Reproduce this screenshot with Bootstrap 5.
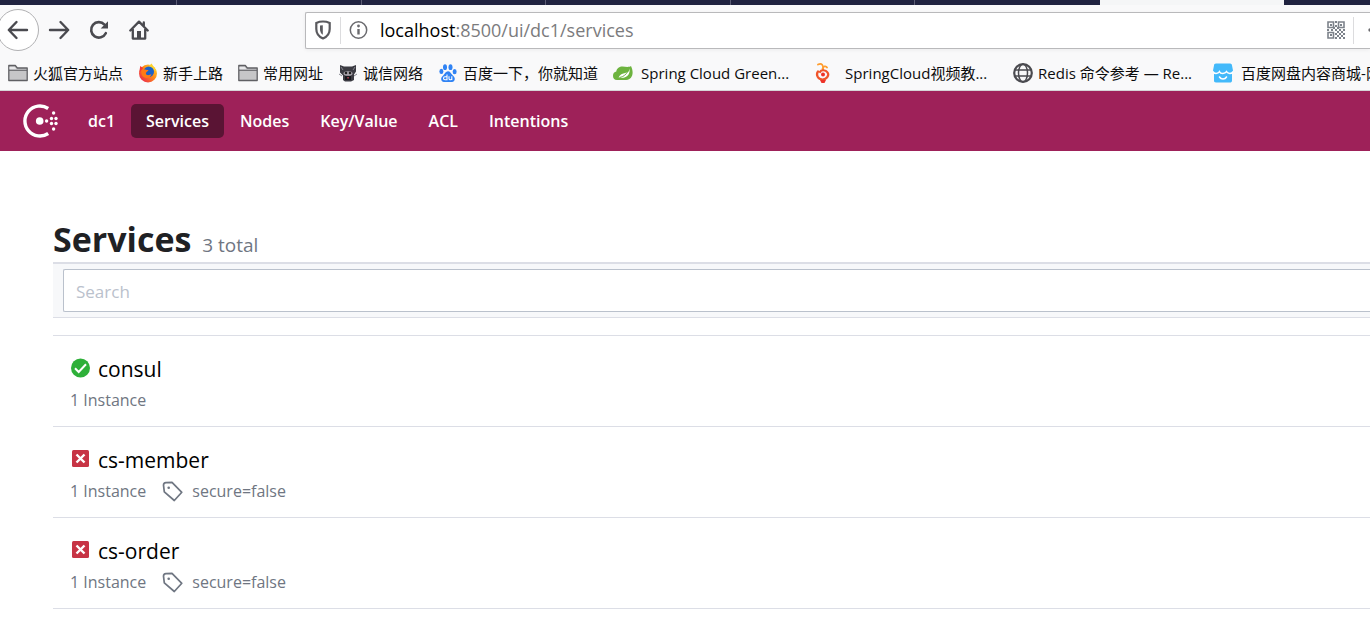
<!DOCTYPE html>
<html lang="zh-CN">
<head>
<meta charset="utf-8">
<meta name="viewport" content="width=device-width, initial-scale=1">
<title>Consul by HashiCorp</title>
<link rel="stylesheet" href="https://cdn.jsdelivr.net/npm/bootstrap@5.3.0/dist/css/bootstrap.min.css">
<script src="https://cdn.jsdelivr.net/npm/bootstrap@5.3.0/dist/js/bootstrap.bundle.min.js"></script>
<style>
  body { font-family: "Open Sans", "Noto Sans CJK SC", sans-serif; color: #000; background: #fff; overflow-x: hidden; }
  svg { display: block; flex: none; }

  /* browser frame */
  .tab-strip { height: 5px; background: #202340; overflow: hidden; }
  .tab-edge { flex: none; width: 184px; border-right: 1px solid #5b5c74; }
  .tab-edge:nth-child(even) { width: 185px; }
  .tab-edge:first-child { width: 177px; }
  .tab-edge.current { background: #f5f6f7; border: 0; }
  .tab-edge.before-current { border-color: #202340; }
  .toolbar { background: #f9f9fa; height: 50px; }
  .tool-btn { width: 40px; height: 42px; border: 0; padding: 0; background: none; display: grid; place-items: center; }
  .tool-btn.back { width: 42px; border: 1px solid #b1b1b3; border-radius: 50%; background: #fff; margin-left: -3px; }
  .address { height: 37px; margin-left: 146px; background: #fff; border: 1px solid #b9b9bb; border-right: 0; border-radius: 2px 0 0 2px; box-shadow: 0 1px 4px rgba(0,0,0,.06); }
  .address .rule { width: 1px; height: 27px; background: #dcdcde; }
  .url { font-size: 18px; line-height: 26px; color: #7b7b7d; }
  .url b { font-weight: 400; color: #000; }
  .bookmarks { background: #f9f9fa; height: 36px; gap: 15px; padding: 0 0 0 8px; border-bottom: 1px solid #d5d5d7; overflow: hidden; }
  .bookmark { display: flex; align-items: center; gap: 5px; flex: none; color: #0c0c0d; font-size: 15px; line-height: 20px; white-space: nowrap; text-decoration: none; }
  .bookmark.wide { width: 185px; gap: 8px; }
  .bookmark.globe { gap: 5px; }

  /* consul */
  .consul-bar { background: #9e2159; height: 60px; padding: 0 0 0 23px; }
  .consul-bar .nav { gap: 1px; margin-left: 14px; }
  .consul-bar .nav-link { color: #fff; font-size: 16px; font-weight: 600; line-height: 24px; padding: 5px 15px; border-radius: 5px; }
  .consul-bar .nav-link.active { background: #5a1434; }
  .page-body { padding: 68px 0 0 53px; }
  .page-title { font-size: 34px; line-height: 40px; font-weight: 700; color: #1f2124; margin: 0; padding-bottom: 3px; }
  .page-title small { font-size: 19px; line-height: 20px; font-weight: 400; color: #6f7682; margin-left: 2px; }
  .filter { background: #f7f8fa; border-top: 2px solid #dcdee6; border-bottom: 1px solid #dcdee6; padding: 5px 0 5px 10px; }
  .filter .form-control { height: 43px; padding: 2px 12px 0; border: 1px solid #bac1cc; border-right: 0; border-radius: 2px 0 0 2px; font-size: 17px; color: #000; }
  .filter .form-control::placeholder { color: #bac1cc; opacity: 1; }
  .service-list { border-top: 1px solid #dcdee6; margin-top: 17px; }
  .service { border-bottom: 1px solid #dcdee6; padding: 18px 0 12px 17px; color: #6f7682; font-size: 16px; line-height: 28px; }
  .service h2 { margin: 0 0 2px; font-size: 21px; line-height: 30px; font-weight: 400; }
  .service h2 a { color: #000; text-decoration: none; }
</style>
</head>
<body>
<div class="tab-strip d-flex" aria-hidden="true">
  <div class="tab-edge"></div><div class="tab-edge"></div><div class="tab-edge"></div><div class="tab-edge"></div><div class="tab-edge"></div><div class="tab-edge before-current"></div><div class="tab-edge current"></div>
</div>

<header>
  <div class="toolbar d-flex align-items-center">
    <button class="tool-btn back" aria-label="Back"><svg width="22" height="20" viewBox="0 0 22 20" fill="none" stroke="#4a4a4f" stroke-width="2.4" stroke-linecap="round" stroke-linejoin="round"><path d="M20 10H2M9.500 2L1.800 10l7.700 8"/></svg></button>
    <button class="tool-btn" aria-label="Forward"><svg width="22" height="20" viewBox="0 0 22 20" fill="none" stroke="#4a4a4f" stroke-width="2.400" stroke-linecap="round" stroke-linejoin="round"><path d="M2 10h18M12.500 2l7.700 8-7.700 8"/></svg></button>
    <button class="tool-btn" aria-label="Reload"><svg width="20" height="20" viewBox="0 0 20 20" fill="none" stroke="#4a4a4f" stroke-width="2.600" stroke-linecap="round"><path d="M16.800 13.200A7.700 7.700 0 1 1 15.500 4.600"/><path d="M19 1.200v7.300h-7.300z" fill="#4a4a4f" stroke="none"/></svg></button>
    <button class="tool-btn" aria-label="Home"><svg width="20" height="20" viewBox="0 0 20 20"><path d="M1.300 10.500L10 1.600l8.700 8.900M3.800 9v9.600h12.400V9M14.800 2.500v4" fill="none" stroke="#4a4a4f" stroke-width="2.300" stroke-linecap="round" stroke-linejoin="round"/><path d="M8 19v-8h4v8z" fill="#4a4a4f"/></svg></button>
    <div class="address d-flex align-items-center flex-grow-1">
      <svg class="ms-2" width="18" height="20" viewBox="0 0 18 20"><path d="M9 1.500c2.500 0 4.700.5 6.700 1.400v6c0 4.600-2.500 7.700-6.700 9.500-4.200-1.800-6.700-4.900-6.700-9.500v-6C4.300 2 6.500 1.500 9 1.500z" fill="none" stroke="#5a5a5e" stroke-width="2.200"/><path d="M8.800 5.200v9.600C6.700 13.500 6 11.500 6 9V5.600z" fill="#5a5a5e"/></svg>
      <span class="rule ms-2 me-2"></span>
      <svg width="19" height="20" viewBox="0 0 19 20"><circle cx="9.500" cy="10" r="8.200" fill="none" stroke="#6a6a6e" stroke-width="1.500"/><circle cx="9.500" cy="6" r="1.400" fill="#6a6a6e"/><path d="M9.500 9v5.500" stroke="#6a6a6e" stroke-width="2.400"/></svg>
      <span class="url flex-grow-1 ps-2 ms-1"><b>localhost</b>:8500/ui/dc1/services</span>
      <svg width="18" height="18" viewBox="0 0 18 18"><g fill="none" stroke="#7d838b" stroke-width="1.600"><path d="M1 1h5.500v5.500H1zM11.500 1H17v5.500h-5.500zM1 11.500h5.500V17H1z"/></g><path fill="#7d838b" d="M3 3h2v2H3zM13 3h2v2h-2zM3 13h2v2H3zM8 0h2v2H8zM8 4h2v2H8zM0 8h2v2H0zM4 8h2v2H4zM6 6h2v2H6zM8 8h2v2H8zM10 6h2v2h-2zM12 8h2v2h-2zM16 8h2v2h-2zM10 10h2v2h-2zM14 10h2v2h-2zM8 12h2v2H8zM12 12h2v2h-2zM16 12h2v2h-2zM10 14h2v2h-2zM14 14h2v2h-2zM8 16h2v2H8zM12 16h2v2h-2zM16 16h2v2h-2z"/></svg>
      <span class="rule ms-2"></span>
      <svg width="16" height="4" viewBox="0 0 16 4"><circle cx="16" cy="2" r="1.700" fill="#6a6a6e"/></svg>
    </div>
  </div>

  <nav class="bookmarks d-flex align-items-center" aria-label="书签">
    <a class="bookmark" href="#"><svg width="20" height="18" viewBox="0 0 20 18"><path d="M.8 16.500V1.500h6.500l2 2.500h9.900v12.500z" fill="#c6c6c8" stroke="#606064" stroke-width="1.300" stroke-linejoin="round"/><path d="M1.500 3h5l2 2.300H1.500z" fill="#e8e8ea"/><path d="M1 6.300h18" stroke="#606064"/></svg>火狐官方站点</a>
    <a class="bookmark" href="#"><svg width="20" height="20" viewBox="0 0 20 20"><defs><linearGradient id="ff" x1="1" y1="0" x2="0" y2="1"><stop offset="0" stop-color="#ffe32c"/><stop offset=".45" stop-color="#ff8a16"/><stop offset="1" stop-color="#e8125c"/></linearGradient></defs><circle cx="10" cy="10.500" r="9" fill="url(#ff)"/><path d="M10 4L13.500 .5l2 3 3 5z" fill="#ffd22c"/><path d="M1.200 10L2.200 3l3 2z" fill="#f43a3a"/><circle cx="10.800" cy="8.800" r="5.200" fill="#1c62c8"/><path d="M3.500 7c3-2 5 .5 7 0-1 2-3 2-2.500 4 1 2 4 1 5.500 0-1 4-5 5-8 3-2-1.500-2.500-4-2-7z" fill="#ff7a16"/></svg>新手上路</a>
    <a class="bookmark" href="#"><svg width="20" height="18" viewBox="0 0 20 18"><path d="M.8 16.500V1.500h6.500l2 2.500h9.900v12.500z" fill="#c6c6c8" stroke="#606064" stroke-width="1.300" stroke-linejoin="round"/><path d="M1.500 3h5l2 2.300H1.500z" fill="#e8e8ea"/><path d="M1 6.300h18" stroke="#606064"/></svg>常用网址</a>
    <a class="bookmark" href="#"><svg width="20" height="20" viewBox="0 0 20 20"><path d="M2 2l4 1.500h8L18 2v6.500l-2 3V17l-3 1.500H7L5 17v-4.500l-3-3z" fill="#3b3b42"/><path d="M3 4l2 3M17 4l-2 3M1 11l3 2M19 11l-3 2" stroke="#85858e" fill="none"/><ellipse cx="10" cy="10.500" rx="4.500" ry="2.300" fill="#aaa5ad"/><circle cx="8" cy="10" r="1.300" fill="#222"/><circle cx="12" cy="10" r="1.300" fill="#222"/><path d="M7 13h6v4H7z" fill="#17171b"/><path d="M9.300 14h1.500v1.500H9.300z" fill="#b45"/></svg>诚信网络</a>
    <a class="bookmark" href="#"><svg width="20" height="20" viewBox="-1 0 20 20"><g fill="#3083f4"><ellipse cx="6" cy="4.200" rx="2" ry="2.900"/><ellipse cx="11.500" cy="4.200" rx="2" ry="2.900"/><ellipse cx="2.400" cy="8.400" rx="2" ry="2.600"/><ellipse cx="15.600" cy="8.700" rx="2" ry="2.600"/><path d="M8.900 8.300c2.200 0 3 2.200 4.500 3.700 1.900 1.700 2.900 3.100 2.200 5-.8 2.400-3.200 2.200-6.700 2-3.500.2-5.900.3-6.600-2-.6-2 .6-3.400 2.300-5C6 10.600 6.900 8.300 8.900 8.300z"/></g><path d="M8 11.500v5.300H6a1.500 1.500 0 010-3h2M10 13.300v2.500c0 1.300 2.800 1.300 2.800 0v-2.500 3.800" fill="none" stroke="#fff" stroke-width="1.100"/></svg><span>百度一下，你就知道</span></a>
    <a class="bookmark wide" href="#"><svg width="20" height="20" viewBox="0 0 20 20"><path d="M18 3c2.200 4.500 2.200 9.500-.3 12-1.700 1.800-3.700 2-6.700 2H4C1.200 17 0 15 0 12.700 0 10.300 1.500 8.800 3.300 8.500 3.800 5.300 6.500 3.500 9.500 3.500c3 .2 6.500 1 8.500-.5z" fill="#6db33f"/><path d="M16.800 5.500c-.5 3-2 4-5.500 4.700-2.500.5-4.500 1.500-5.700 4.300 4 1 8.200 0 9.800-2.700 1.200-2 1.300-4 1.400-6.300z" fill="#fff"/><path d="M6.500 14.500c4-.4 6.500-3 9-7" stroke="#6db33f" fill="none"/></svg>Spring Cloud Green...</a>
    <a class="bookmark wide" href="#"><svg width="20" height="22" viewBox="0 0 20 22" fill="none"><path d="M5 2.500c4-2 5.500 1 5 5M9.500 7C10 4 13 3.800 14 5.500" stroke="#ff9d2e" stroke-width="1.800" stroke-linecap="round"/><path d="M5 9.500C2.500 13 5 17.500 9.500 17.500S16.500 13 14.500 10.300C12.800 7.700 8 7.500 7 10" stroke="#f0552a" stroke-width="2.200" stroke-linecap="round"/><circle cx="10" cy="12.500" r="2" fill="#ee3328"/><path d="M7 18h6l-1.500 3h-3z" fill="#ee3328"/></svg><span class="ps-1">SpringCloud视频教...</span></a>
    <a class="bookmark wide globe" href="#"><svg width="20" height="20" viewBox="0 0 20 20" fill="none" stroke="#4a4a4f"><circle cx="10" cy="10" r="8.800" stroke-width="2.200"/><ellipse cx="10" cy="10" rx="4.500" ry="8.800" stroke-width="1.500"/><path d="M1.500 7h17M1.500 13h17" stroke-width="1.500"/></svg>Redis 命令参考 — Re...</a>
    <a class="bookmark wide" href="#"><svg width="20" height="20" viewBox="0 0 20 20"><path d="M3 .5h14c1.500 0 2 1 2 2l1 5-1 2.500v7.500c0 1.500-.8 2-2 2H3c-1.500 0-2-.8-2-2V10L0 7.500l1-5c0-1.200.7-2 2-2z" fill="#43b9fa"/><path d="M0 8.500c1 2.500 5 2.500 6.500.2 1 2.300 5.500 2.300 7 0 1.500 2.300 5.500 2.300 6.500-.2" fill="none" stroke="#fff" stroke-width="1.500"/><path d="M6.500 14c1.500 2.500 5.500 2.500 7 0" fill="none" stroke="#fff" stroke-width="1.500" stroke-linecap="round"/></svg>百度网盘内容商城-网</a>
  </nav>
</header>

<nav class="consul-bar d-flex align-items-center" aria-label="Consul">
  <a href="#" aria-label="Consul"><svg width="36" height="36" viewBox="0 0 36 36"><path d="M25.200 5.500A15 15 0 1 0 25.200 30.500" fill="none" stroke="#fff" stroke-width="3.400"/><g fill="#fff"><circle cx="16.700" cy="18" r="3.800"/><circle cx="23.600" cy="18" r="1.700"/><circle cx="28.500" cy="15.500" r="1.700"/><circle cx="28.500" cy="20.500" r="1.700"/><circle cx="33" cy="15.500" r="1.700"/><circle cx="33" cy="20.500" r="1.700"/><circle cx="30.600" cy="10" r="1.700"/><circle cx="30.600" cy="26" r="1.700"/></g></svg></a>
  <ul class="nav flex-nowrap">
    <li class="nav-item"><a class="nav-link" href="#">dc1</a></li>
    <li class="nav-item"><a class="nav-link active" aria-current="page" href="#">Services</a></li>
    <li class="nav-item"><a class="nav-link" href="#">Nodes</a></li>
    <li class="nav-item"><a class="nav-link" href="#">Key/Value</a></li>
    <li class="nav-item"><a class="nav-link" href="#">ACL</a></li>
    <li class="nav-item"><a class="nav-link" href="#">Intentions</a></li>
  </ul>
</nav>

<main class="page-body">
  <h1 class="page-title">Services <small>3 total</small></h1>
  <form class="filter"><input class="form-control" type="search" placeholder="Search" aria-label="Search"></form>
  <ul class="service-list list-unstyled mb-0">
    <li class="service">
      <h2 class="d-flex"><svg class="mt-1 me-2" width="20" height="20" viewBox="0 0 20 20"><circle cx="10.500" cy="10" r="9.500" fill="#2eb039"/><path d="M5 10.300L8.700 14 16 6.300" fill="none" stroke="#fff" stroke-width="2"/></svg><a href="#">consul</a></h2>
      <div class="d-flex">1 Instance</div>
    </li>
    <li class="service">
      <h2 class="d-flex"><svg class="mt-1 me-2" width="20" height="20" viewBox="0 0 20 20"><rect x="2" y="1" width="17" height="17" rx="1.500" fill="#c73445"/><path d="M6.500 5.500l8 8M14.500 5.500l-8 8" stroke="#fff" stroke-width="2.400"/></svg><a href="#">cs-member</a></h2>
      <div class="d-flex"><span>1 Instance</span><svg class="ms-3 me-2 mt-1" width="22" height="22" viewBox="0 0 22 22"><path d="M1.500 4.200c0-1.500.9-2.500 2.400-2.600L10 1.300l9.800 10-7.500 8.200L2.300 10.800z" fill="none" stroke="#6f7682" stroke-width="1.700" stroke-linejoin="round"/><circle cx="6.700" cy="6.700" r="1.300" fill="#6f7682"/></svg><span>secure=false</span></div>
    </li>
    <li class="service">
      <h2 class="d-flex"><svg class="mt-1 me-2" width="20" height="20" viewBox="0 0 20 20"><rect x="2" y="1" width="17" height="17" rx="1.500" fill="#c73445"/><path d="M6.500 5.500l8 8M14.500 5.500l-8 8" stroke="#fff" stroke-width="2.400"/></svg><a href="#">cs-order</a></h2>
      <div class="d-flex"><span>1 Instance</span><svg class="ms-3 me-2 mt-1" width="22" height="22" viewBox="0 0 22 22"><path d="M1.500 4.200c0-1.500.9-2.500 2.400-2.600L10 1.300l9.800 10-7.500 8.200L2.300 10.800z" fill="none" stroke="#6f7682" stroke-width="1.700" stroke-linejoin="round"/><circle cx="6.700" cy="6.700" r="1.300" fill="#6f7682"/></svg><span>secure=false</span></div>
    </li>
  </ul>
</main>
</body>
</html>
